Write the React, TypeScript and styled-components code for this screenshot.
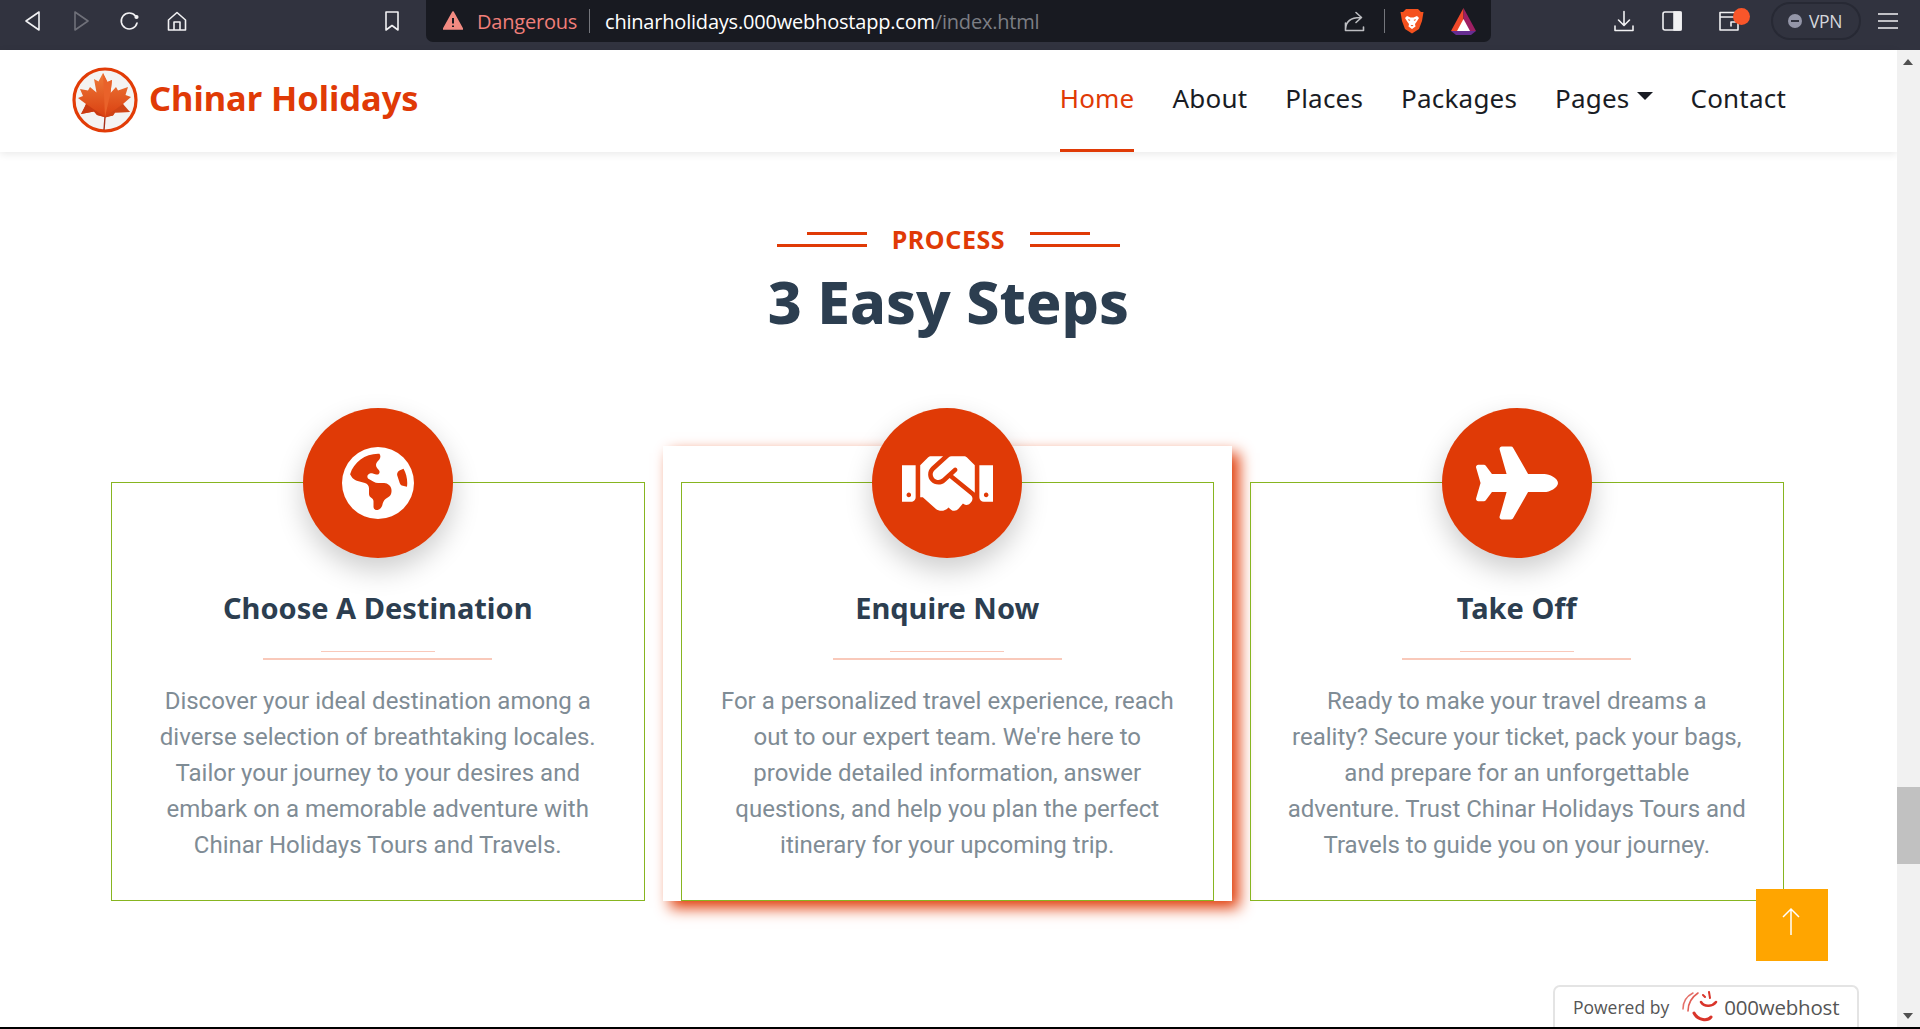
import React from "react";
import styled, { createGlobalStyle } from "styled-components";
import { FaHandshake, FaPlane } from "react-icons/fa";
import { FaEarthAmericas } from "react-icons/fa6";

const Global = createGlobalStyle`
  html, body { margin: 0; padding: 0; height: 1029px; overflow: hidden; background: #fff; }
  * { box-sizing: border-box; }
`;

const Shell = styled.div`
  width: 1920px;
  height: 1029px;
  display: flex;
  flex-direction: column;
  overflow: hidden;
  font-family: "Roboto", sans-serif;
`;

const Chrome = styled.header`
  height: 50px;
  flex: none;
  background: #31333f;
  display: flex;
  align-items: flex-start;
  color: #f1f1f3;
`;

const ChromeIcon = styled.svg<{ $ml: number; $w: number; $dim?: boolean }>`
  flex: none;
  margin-left: ${(p) => p.$ml}px;
  margin-top: 10px;
  width: ${(p) => p.$w}px;
  height: 22px;
  opacity: ${(p) => (p.$dim ? 0.32 : 1)};
  fill: none;
  stroke: currentColor;
  stroke-width: 1.6;
  stroke-linejoin: round;
  stroke-linecap: round;
`;

const UrlBox = styled.div`
  margin-left: 27px;
  width: 1065px;
  height: 42px;
  flex: none;
  background: #181a21;
  border-radius: 0 0 7px 7px;
  display: flex;
  align-items: center;
  font-family: "Open Sans", sans-serif;
  font-size: 20px;
  letter-spacing: -0.2px;
`;

const Danger = styled.span`
  margin-left: 14px;
  width: 100px;
  color: #f07f7a;
`;

const UrlDivider = styled.span<{ $ml: number }>`
  width: 1px;
  height: 24px;
  flex: none;
  margin-left: ${(p) => p.$ml}px;
  background: #74767c;
`;

const Host = styled.span`
  margin-left: 15px;
  color: #ffffff;
`;

const UrlPath = styled.span`
  color: #7c7e84;
`;

const UrlGlyph = styled.svg<{ $ml: number; $w: number }>`
  flex: none;
  margin-left: ${(p) => p.$ml}px;
  width: ${(p) => p.$w}px;
  height: ${(p) => p.$w + 2}px;
`;

const WalletWrap = styled.div`
  position: relative;
  flex: none;
  margin-left: 37px;
  margin-top: 10px;
  width: 20px;
  height: 22px;
`;

const WalletDot = styled.span`
  position: absolute;
  left: 14px;
  top: -2px;
  width: 17px;
  height: 17px;
  border-radius: 50%;
  background: #f9562a;
`;

const VpnPill = styled.div`
  flex: none;
  margin-left: 32px;
  margin-top: 2px;
  width: 90px;
  height: 38px;
  border: 2px solid #272934;
  border-radius: 19px;
  display: flex;
  align-items: center;
  padding-left: 15px;
  gap: 7px;
  font-family: "Open Sans", sans-serif;
  font-size: 17.5px;
  letter-spacing: -0.4px;
  color: #d6d7dc;
`;

const VpnDot = styled.span`
  width: 14px;
  height: 14px;
  border-radius: 50%;
  background: #9496a8;
  display: flex;
  align-items: center;
  justify-content: center;
  &::before {
    content: "";
    width: 8px;
    height: 2px;
    background: #31333f;
  }
`;

const Viewport = styled.div`
  flex: 1;
  min-height: 0;
  display: flex;
`;

const Page = styled.main`
  position: relative;
  flex: 1;
  min-width: 0;
  background: #fff;
`;

const Navbar = styled.nav`
  height: 102px;
  display: flex;
  align-items: stretch;
  justify-content: space-between;
  padding: 0 111px 0 72px;
  background: #fff;
  box-shadow: 0 2px 8px rgba(0, 0, 0, 0.09);
`;

const Brand = styled.a`
  display: flex;
  align-items: center;
  gap: 11px;
  color: #e03a06;
  font-family: "Noto Sans", sans-serif;
  font-weight: 700;
  font-size: 34.4px;
`;

const BrandLabel = styled.span`
  margin-top: -7px;
`;

const BrandMark = styled.svg`
  width: 66px;
  height: 66px;
  flex: none;
  margin-top: -2px;
`;

const NavList = styled.ul`
  display: flex;
  gap: 38px;
  margin: 0;
  padding: 0;
  list-style: none;
`;

const NavItem = styled.li<{ $active?: boolean }>`
  display: flex;
  align-items: center;
  padding-bottom: 4px;
  border-bottom: 3px solid ${(p) => (p.$active ? "#e03a06" : "transparent")};
  color: ${(p) => (p.$active ? "#e03a06" : "#191c24")};
  font-family: "Noto Sans", sans-serif;
  font-size: 26px;
  letter-spacing: 0.2px;
`;

const Caret = styled.span`
  width: 0;
  height: 0;
  margin: -4px 0 0 7px;
  border-left: 8px solid transparent;
  border-right: 8px solid transparent;
  border-top: 8px solid #191c24;
`;

const Section = styled.section`
  padding-top: 72px;
`;

const Eyebrow = styled.div`
  display: flex;
  justify-content: center;
  align-items: center;
  gap: 25px;
  height: 30px;
  color: #e03a06;
  font-family: "Noto Sans", sans-serif;
  font-weight: 700;
  font-size: 25px;
  letter-spacing: 0.6px;
`;

const DoubleRule = styled.span<{ $right?: boolean }>`
  display: flex;
  flex-direction: column;
  align-items: ${(p) => (p.$right ? "flex-start" : "flex-end")};
  gap: 9px;
  &::before,
  &::after {
    content: "";
    height: 3px;
    background: #e03a06;
  }
  &::before { width: 60px; }
  &::after { width: 90px; }
`;

const Title = styled.h2`
  margin: 7px 0 0;
  text-align: center;
  color: #2c3e50;
  font-family: "Noto Sans", sans-serif;
  font-weight: 800;
  font-size: 59px;
  line-height: 80px;
`;

const Steps = styled.div`
  margin-top: 105px;
  padding-left: 93px;
  display: grid;
  grid-template-columns: repeat(3, 569.5px);
`;

const Column = styled.article<{ $featured?: boolean }>`
  height: 455px;
  padding: 36px 18px 0;
  ${(p) => p.$featured && "background: #fff; box-shadow: 7px 7px 14px #e03a06;"}
`;

const Card = styled.div`
  height: 419px;
  border: 1px solid #87b520;
  display: flex;
  flex-direction: column;
  align-items: center;
  text-align: center;
`;

const IconDisc = styled.div`
  width: 150px;
  height: 150px;
  flex: none;
  margin-top: -75px;
  border-radius: 50%;
  background: #e03a06;
  color: #fff;
  display: flex;
  align-items: center;
  justify-content: center;
  box-shadow: 0 12px 28px rgba(0, 0, 0, 0.2);
`;

const CardTitle = styled.h3`
  margin: 30px 0 0;
  color: #2c3e50;
  font-family: "Noto Sans", sans-serif;
  font-weight: 700;
  font-size: 29px;
  line-height: 40px;
`;

const TitleRule = styled.div`
  margin-top: 23px;
  width: 229px;
  display: flex;
  flex-direction: column;
  align-items: center;
  gap: 6px;
  &::before,
  &::after {
    content: "";
    display: block;
    background: #f9c9ba;
  }
  &::before { width: 114px; height: 1px; }
  &::after { width: 229px; height: 1.5px; }
`;

const CardText = styled.p`
  margin: 23px 0 0;
  width: 480px;
  color: #7f8c95;
  font-size: 24px;
  line-height: 36px;
`;

const ToTop = styled.a`
  position: absolute;
  left: 1756px;
  top: 839px;
  width: 72px;
  height: 72px;
  background: #ffa500;
  display: flex;
  align-items: center;
  justify-content: center;
`;

const ToTopIcon = styled.svg`
  width: 20px;
  height: 30px;
  margin: -6px 0 0 -3px;
  fill: none;
  stroke: #fff;
  stroke-width: 1.5;
`;

const HostBadge = styled.div`
  position: absolute;
  left: 1553px;
  top: 935px;
  width: 306px;
  height: 42px;
  background: #fff;
  border: 2px solid #e4e4e4;
  border-bottom: 0;
  border-radius: 7px 7px 0 0;
  display: flex;
  align-items: center;
  padding-left: 18px;
  font-family: "Open Sans", sans-serif;
  color: #555;
`;

const PoweredBy = styled.span`
  font-size: 17.5px;
`;

const HostName = styled.span`
  font-size: 20.5px;
  letter-spacing: -0.2px;
  margin-left: 5px;
`;

const HostLogo = styled.svg`
  width: 38px;
  height: 32px;
  margin-left: 12px;
  flex: none;
`;

const Scrollbar = styled.aside`
  position: relative;
  width: 23px;
  flex: none;
  background: #f1f1f1;
`;

const ScrollArrow = styled.span<{ $down?: boolean }>`
  position: absolute;
  left: 6px;
  ${(p) => (p.$down ? "bottom: 8px;" : "top: 9px;")}
  width: 0;
  height: 0;
  border-left: 5.5px solid transparent;
  border-right: 5.5px solid transparent;
  ${(p) => (p.$down ? "border-top: 6px solid #505050;" : "border-bottom: 6px solid #505050;")}
`;

const ScrollThumb = styled.span`
  position: absolute;
  left: 0;
  top: 737px;
  width: 100%;
  height: 77px;
  background: #c1c1c1;
`;

const BottomEdge = styled.div`
  height: 2px;
  flex: none;
  background: #000;
`;

const steps = [
  {
    icon: <FaEarthAmericas size={72} />,
    title: "Choose A Destination",
    lines: [
      "Discover your ideal destination among a",
      "diverse selection of breathtaking locales.",
      "Tailor your journey to your desires and",
      "embark on a memorable adventure with",
      "Chinar Holidays Tours and Travels.",
    ],
  },
  {
    icon: <FaHandshake size={91} />,
    title: "Enquire Now",
    featured: true,
    lines: [
      "For a personalized travel experience, reach",
      "out to our expert team. We're here to",
      "provide detailed information, answer",
      "questions, and help you plan the perfect",
      "itinerary for your upcoming trip.",
    ],
  },
  {
    icon: <FaPlane size={82} />,
    title: "Take Off",
    lines: [
      "Ready to make your travel dreams a",
      "reality? Secure your ticket, pack your bags,",
      "and prepare for an unforgettable",
      "adventure. Trust Chinar Holidays Tours and",
      "Travels to guide you on your journey.",
    ],
  },
];

const navItems = ["Home", "About", "Places", "Packages", "Pages", "Contact"];

const MapleLogo = () => (
  <BrandMark viewBox="0 0 66 66">
    <defs>
      <linearGradient id="leaf" x1="0" y1="0" x2="0" y2="1">
        <stop offset="0" stopColor="#ee7b3a" />
        <stop offset="1" stopColor="#d93f10" />
      </linearGradient>
    </defs>
    <circle cx="33" cy="33" r="31" fill="#f4f3f2" stroke="#e23c07" strokeWidth="3.2" />
    <path
      d="M31 6 L35.5 15 L40 13 L38.5 26 L44 20 L46 23.5 L56 20 L53.5 28 L59 30 L51 37 L53 42 L58 45 L43 45.5 L41 48.5 L33.5 50.5 L25 48 L22 44.5 L9 47 L12.5 41 L14 37 L6 31 L11 29 L8 22 L16 23.5 L18 20 L24.5 25.5 L22 12 L26.5 14.5 Z"
      fill="url(#leaf)"
    />
    <path d="M31 6 L35.5 15 L40 13 L38.5 26 L33 50 Z" fill="#e9622a" />
    <path d="M9 47 L22 44.5 L25 48 L33 50 L14 37 Z" fill="#c93a12" />
    <path d="M58 45 L43 45.5 L41 48.5 L33 50 L51 37 Z" fill="#cf4416" />
    <path d="M33 50 L32 63" stroke="#a8321a" strokeWidth="1.4" fill="none" />
  </BrandMark>
);

const BraveLogo = () => (
  <UrlGlyph $ml={15} $w={24} viewBox="0 0 24 26">
    <path d="M6 1 H18 L21 4 L23.5 4 L22 13 L19 21 L12 25.5 L5 21 L2 13 L.5 4 L3 4 Z" fill="#f4511e" />
    <path d="M7 8 L10.5 9.5 H13.5 L17 8 L19 10 L16.5 14 L15 16 L15.5 18.5 L12 21 L8.5 18.5 L9 16 L7.5 14 L5 10 Z" fill="#fff" />
    <path d="M10.5 17 H13.5 L12 18.5 Z M8 11 L10.5 12 L9 13 Z M16 11 L13.5 12 L15 13 Z" fill="#f4511e" />
  </UrlGlyph>
);

const BatLogo = () => (
  <UrlGlyph $ml={26} $w={27} viewBox="0 0 27 29">
    <path d="M13.5 1 L1 24 H8 L13.5 14 Z" fill="#f0492a" />
    <path d="M13.5 1 L26 24 H19 L13.5 14 Z" fill="#9e1f63" />
    <path d="M1 24 H26 L21 28 H6 Z" fill="#662d91" />
    <path d="M13.5 12 L20 24 H7 Z" fill="#fff" />
  </UrlGlyph>
);

const WebhostLogo = () => (
  <HostLogo viewBox="0 0 38 32">
    <g fill="none" stroke="#d9352b" strokeLinecap="round">
      <path d="M12 2 C6 5 2 11 2 18" strokeWidth="1.5" opacity=".7" />
      <path d="M17 2 C11 6 7 12 7 20" strokeWidth="1.6" opacity=".8" />
      <path d="M13 22 C17 30 27 30 30 26" strokeWidth="3" />
      <path d="M20 11 C24 17 32 15 35 11" strokeWidth="2.6" />
      <path d="M22 4 L24 6 M28 1 L29 7" strokeWidth="2" />
    </g>
  </HostLogo>
);

export default function App() {
  return (
    <Shell>
      <Global />
      <Chrome>
        <ChromeIcon $ml={24} $w={17} viewBox="0 0 17 22"><path d="M15 2 V20 L2 11 Z" /></ChromeIcon>
        <ChromeIcon $ml={32} $w={17} $dim viewBox="0 0 17 22"><path d="M2 2 V20 L15 11 Z" /></ChromeIcon>
        <ChromeIcon $ml={29} $w={20} viewBox="0 0 20 22"><path d="M16.5 6 A8 8 0 1 0 18 13" /><circle cx="17.5" cy="7" r="1.3" fill="currentColor" /></ChromeIcon>
        <ChromeIcon $ml={28} $w={20} viewBox="0 0 20 22"><path d="M1.5 10 L10 2.5 L18.5 10 V20 H1.5 Z M7 20 V12 H13 V20" /></ChromeIcon>
        <ChromeIcon $ml={198} $w={14} viewBox="0 0 14 22"><path d="M1 2 H13 V20 L7 15.5 L1 20 Z" /></ChromeIcon>
        <UrlBox>
          <UrlGlyph $ml={17} $w={20} viewBox="0 0 20 22">
            <path d="M10 2 L19.5 19 H.5 Z" fill="#f28b82" stroke="#f28b82" strokeWidth="1.6" strokeLinejoin="round" />
            <path d="M10 8 V13.5 M10 15.6 V17" stroke="#181a21" strokeWidth="2" />
          </UrlGlyph>
          <Danger>Dangerous</Danger>
          <UrlDivider $ml={12} />
          <Host>chinarholidays.000webhostapp.com<UrlPath>/index.html</UrlPath></Host>
          <ChromeIcon $ml={305} $w={21} viewBox="0 0 21 22" style={{ marginTop: 0, color: "#bdbec2" }}>
            <path d="M1.5 13 V20.5 H19.5 V17 M1.5 19 C2 11 7 7.5 16 7.5 M12 2.5 L17.5 7.5 L12 12.5" />
          </ChromeIcon>
          <UrlDivider $ml={19} />
          <BraveLogo />
          <BatLogo />
        </UrlBox>
        <ChromeIcon $ml={123} $w={20} viewBox="0 0 20 22"><path d="M10 1.5 V15 M4.5 10 L10 15.5 L15.5 10 M1 16 V20.5 H19 V16" /></ChromeIcon>
        <ChromeIcon $ml={28} $w={20} viewBox="0 0 20 22"><rect x="1" y="2" width="18" height="18" rx="2" /><rect x="12" y="2" width="7" height="18" fill="currentColor" /></ChromeIcon>
        <WalletWrap>
          <ChromeIcon $ml={0} $w={20} viewBox="0 0 20 22" style={{ marginTop: 0 }}><path d="M1 2.5 H19 V20 H1 Z M1 7 H19 M12 16 V12 H18" /></ChromeIcon>
          <WalletDot />
        </WalletWrap>
        <VpnPill><VpnDot />VPN</VpnPill>
        <ChromeIcon $ml={17} $w={20} viewBox="0 0 20 22"><path d="M0 4 H20 M0 11 H20 M0 18 H20" /></ChromeIcon>
      </Chrome>
      <Viewport>
        <Page>
          <Navbar>
            <Brand><MapleLogo /><BrandLabel>Chinar Holidays</BrandLabel></Brand>
            <NavList>
              {navItems.map((n, i) => (
                <NavItem key={n} $active={i === 0}>
                  {n}
                  {n === "Pages" && <Caret />}
                </NavItem>
              ))}
            </NavList>
          </Navbar>
          <Section>
            <Eyebrow>
              <DoubleRule />
              PROCESS
              <DoubleRule $right />
            </Eyebrow>
            <Title>3 Easy Steps</Title>
            <Steps>
              {steps.map((s) => (
                <Column key={s.title} $featured={s.featured}>
                  <Card>
                    <IconDisc>{s.icon}</IconDisc>
                    <CardTitle>{s.title}</CardTitle>
                    <TitleRule />
                    <CardText>
                      {s.lines.map((l) => (
                        <React.Fragment key={l}>{l}<br /></React.Fragment>
                      ))}
                    </CardText>
                  </Card>
                </Column>
              ))}
            </Steps>
          </Section>
          <ToTop>
            <ToTopIcon viewBox="0 0 20 30"><path d="M10 28 V2 M2 10 L10 2 L18 10" /></ToTopIcon>
          </ToTop>
          <HostBadge>
            <PoweredBy>Powered by</PoweredBy>
            <WebhostLogo />
            <HostName>000webhost</HostName>
          </HostBadge>
        </Page>
        <Scrollbar>
          <ScrollArrow />
          <ScrollThumb />
          <ScrollArrow $down />
        </Scrollbar>
      </Viewport>
      <BottomEdge />
    </Shell>
  );
}
